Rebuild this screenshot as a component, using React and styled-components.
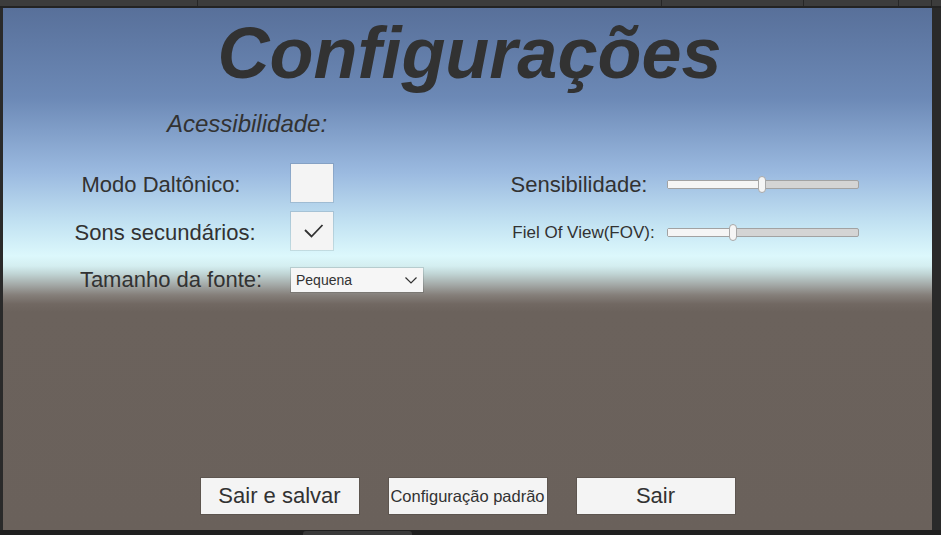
import React from 'react';
import styled, { createGlobalStyle } from 'styled-components';

const GlobalStyle = createGlobalStyle`
  html, body {
    margin: 0;
    padding: 0;
    background: #282828;
    overflow: hidden;
  }
  * {
    box-sizing: border-box;
  }
`;

const sliders = [
  { label: 'Sensibilidade:', value: 49.5, small: false },
  { label: 'Fiel Of View(FOV):', value: 34, small: true },
];

function Checkbox({ checked }) {
  return (
    <CheckBox>
      {checked && (
        <svg width='42' height='38' viewBox='0 0 42 38'>
          <polyline
            points='14,18 20.5,24.5 31.5,13'
            fill='none'
            stroke='#323232'
            strokeWidth='1.8'
          />
        </svg>
      )}
    </CheckBox>
  );
}

function Slider({ value }) {
  return (
    <Track>
      <Fill $value={value} />
      <Handle $value={value} />
    </Track>
  );
}

function App() {
  return (
    <Window>
      <GlobalStyle />
      <Toolbar>
        <ToolItem $w={198} />
        <ToolItem $w={464} />
        <ToolItem $w={142} />
        <ToolItem $w={95} />
        <ToolItem $w={33} />
      </Toolbar>

      <Middle>
        <Edge $w={3} />
        <GameView>
          <Title>Configurações</Title>

          <Content>
            <Panel $cols='214px 132px' $gap={21}>
              <Heading>Acessibilidade:</Heading>
              <Label>Modo Daltônico:</Label>
              <Checkbox />
              <Label $nudge={8}>Sons secundários:</Label>
              <Checkbox checked />
              <Label $nudge={20} $end>
                Tamanho da fonte:
              </Label>
              <Dropdown>
                <span>Pequena</span>
                <svg width='12' height='7' viewBox='0 0 12 7'>
                  <polyline
                    points='0.5,0.5 6,6 11.5,0.5'
                    fill='none'
                    stroke='#323232'
                    strokeWidth='1.2'
                  />
                </svg>
              </Dropdown>
            </Panel>

            <Panel $cols='164px 192px' $gap={6}>
              <Spacer />
              {sliders.map((s) => (
                <React.Fragment key={s.label}>
                  <Label $small={s.small} $nudge={s.small ? 13 : 4}>
                    {s.label}
                  </Label>
                  <Slider value={s.value} />
                </React.Fragment>
              ))}
            </Panel>
          </Content>

          <Buttons>
            <Button>Sair e salvar</Button>
            <Button $small>Configuração padrão</Button>
            <Button>Sair</Button>
          </Buttons>
        </GameView>
        <Edge $w={9} />
      </Middle>

      <Footer>
        <Tab />
      </Footer>
    </Window>
  );
}

export default App;

const Window = styled.div`
  width: 941px;
  height: 535px;
  display: flex;
  flex-direction: column;
  background: #282828;
  font-family: 'Liberation Sans', Arial, sans-serif;
`;

const Toolbar = styled.div`
  height: 8px;
  display: flex;
  background: #3c3c3c;
  border-bottom: 2px solid #232323;
  overflow: hidden;
`;

const ToolItem = styled.div`
  width: ${(p) => p.$w}px;
  flex: none;
  border-right: 1px solid #262626;
`;

const Middle = styled.div`
  height: 522px;
  display: flex;
`;

const Edge = styled.div`
  width: ${(p) => p.$w}px;
  flex: none;
  background: #2a2a2a;
`;

const GameView = styled.div`
  width: 929px;
  flex: none;
  display: flex;
  flex-direction: column;
  padding: 9px 0 16px;
  color: #323232;
  background: linear-gradient(
    180deg,
    #58709a 0px,
    #6c89b6 90px,
    #9bbae0 165px,
    #c2e2f2 215px,
    #dcf8fc 248px,
    #d4eef0 258px,
    #c0d4d4 266px,
    #a3a8a6 277px,
    #857f7a 287px,
    #716862 296px,
    #6b625c 304px,
    #6a615b 100%
  );
`;

const Title = styled.h1`
  margin: 0;
  font-size: 72px;
  line-height: 72px;
  font-weight: bold;
  font-style: italic;
  text-align: center;
  padding-left: 4px;
`;

const Content = styled.div`
  display: flex;
  gap: 74px;
  padding-left: 53px;
  margin-top: 21px;
`;

const Panel = styled.div`
  display: grid;
  grid-template-columns: ${(p) => p.$cols};
  grid-template-rows: 44px 38px 38px 32px;
  column-gap: ${(p) => p.$gap}px;
  row-gap: 10px;
  align-items: center;
`;

const Heading = styled.h2`
  grid-column: 1 / -1;
  align-self: start;
  margin: 0 0 0 111px;
  font-size: 24px;
  line-height: 28px;
  font-weight: normal;
  font-style: italic;
`;

const Spacer = styled.div`
  grid-column: 1 / -1;
`;

const Label = styled.div`
  font-size: ${(p) => (p.$small ? '17px' : '22px')};
  line-height: 24px;
  text-align: center;
  white-space: nowrap;
  padding-left: ${(p) => p.$nudge || 0}px;
  padding-right: 4px;
  padding-top: ${(p) => (p.$end ? '0' : '4px')};
  align-self: ${(p) => (p.$end ? 'end' : 'center')};
`;

const CheckBox = styled.div`
  width: 42px;
  height: 38px;
  background: #f4f4f4;
  box-shadow: 0 0 0 1px rgba(0, 0, 0, 0.1);
  svg {
    display: block;
  }
`;

const Dropdown = styled.div`
  align-self: end;
  width: 132px;
  height: 24px;
  display: flex;
  align-items: center;
  justify-content: space-between;
  padding: 0 6px 0 5px;
  background: #f6f6f6;
  box-shadow: 0 0 0 1px rgba(0, 0, 0, 0.12);
  font-size: 14px;
  svg {
    margin-top: 1px;
  }
`;

const Track = styled.div`
  position: relative;
  width: 192px;
  height: 9px;
  margin-top: 2px;
  background: #d4d4d4;
  border: 1px solid #a2a2a2;
  border-radius: 2px;
`;

const Fill = styled.div`
  height: 100%;
  width: ${(p) => p.$value}%;
  background: #f5f5f5;
`;

const Handle = styled.div`
  position: absolute;
  top: -5px;
  left: calc(${(p) => p.$value}% - 4px);
  width: 8px;
  height: 17px;
  border-radius: 4px;
  background: #f5f5f5;
  border: 1px solid #a8a8a8;
`;

const Buttons = styled.div`
  margin-top: auto;
  display: flex;
  justify-content: center;
  gap: 30px;
`;

const Button = styled.button`
  width: 158px;
  height: 36px;
  padding: 0;
  border: none;
  background: #f4f4f4;
  box-shadow: 0 0 0 1px rgba(0, 0, 0, 0.12);
  color: #323232;
  font-family: 'Liberation Sans', Arial, sans-serif;
  font-size: ${(p) => (p.$small ? '16.5px' : '22px')};
  white-space: nowrap;
`;

const Footer = styled.div`
  height: 5px;
  background: #1f1f1f;
  padding: 1px 0 0 303px;
`;

const Tab = styled.div`
  width: 109px;
  height: 4px;
  background: #3a3a3a;
  border-radius: 3px 3px 0 0;
`;
